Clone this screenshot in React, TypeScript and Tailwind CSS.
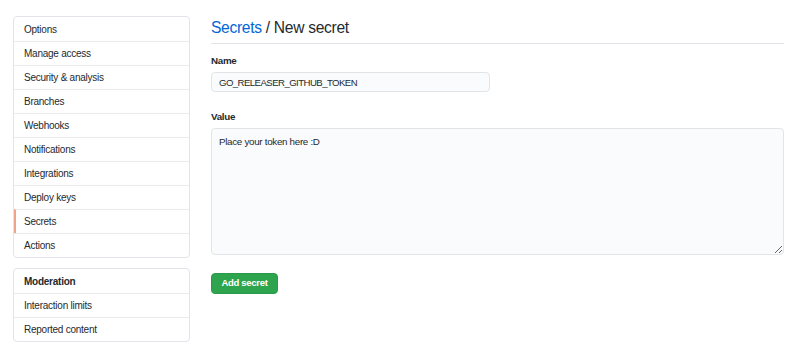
import React from "react";

const items = [
  "Options",
  "Manage access",
  "Security & analysis",
  "Branches",
  "Webhooks",
  "Notifications",
  "Integrations",
  "Deploy keys",
  "Secrets",
  "Actions",
];

export default function App() {
  return (
    <div
      className="w-[800px] h-[361px] bg-white text-[#24292e] flex pl-[13px] pt-[16px] gap-[21px]"
      style={{ fontFamily: '"Liberation Sans", Arial, sans-serif' }}
    >
      <div className="w-[177px] flex flex-col gap-[10px] shrink-0">
        <nav className="border border-[#e1e4e8] rounded-[4px] overflow-hidden">
          {items.map((it, i) => (
            <div
              key={it}
              className={
                "h-[24px] flex items-center text-[10px] tracking-[-0.25px] " +
                (i > 0 ? "border-t border-[#eaecef] " : "") +
                (it === "Secrets"
                  ? "border-l-2 border-l-[#f0a38a] pl-[8px]"
                  : "pl-[10px]")
              }
            >
              {it}
            </div>
          ))}
        </nav>
        <nav className="border border-[#e1e4e8] rounded-[4px] overflow-hidden">
          <div className="h-[24px] flex items-center pl-[10px] text-[10px] tracking-[-0.25px] font-bold">
            Moderation
          </div>
          <div className="h-[24px] flex items-center pl-[10px] text-[10px] tracking-[-0.25px] border-t border-[#eaecef]">
            Interaction limits
          </div>
          <div className="h-[24px] flex items-center pl-[10px] text-[10px] tracking-[-0.25px] border-t border-[#eaecef]">
            Reported content
          </div>
        </nav>
      </div>
      <div className="w-[573px] flex flex-col">
        <div className="h-[28px] border-b border-[#e1e4e8] text-[15.6px] tracking-[-0.3px] leading-[24px]">
          <span className="text-[#0366d6]">Secrets</span> / New secret
        </div>
        <label className="mt-[8px] h-[18px] leading-[18px] text-[9.8px] tracking-[-0.3px] font-bold">Name</label>
        <input
          readOnly
          value="GO_RELEASER_GITHUB_TOKEN"
          className="mt-[2px] w-[279px] h-[20px] bg-[#fafbfc] border border-[#e1e4e8] rounded-[4px] px-[7px] text-[9.6px] tracking-[-0.55px] text-[#24292e] outline-none"
          style={{ fontFamily: '"Liberation Sans", Arial, sans-serif' }}
        />
        <label className="mt-[16px] h-[18px] leading-[18px] text-[9.8px] tracking-[-0.3px] font-bold">Value</label>
        <textarea
          readOnly
          value="Place your token here :D"
          className="mt-[2px] w-[573px] h-[127px] bg-[#fafbfc] border border-[#e1e4e8] rounded-[4px] px-[7px] py-[6px] text-[9.8px] tracking-[-0.3px] leading-[14px] text-[#24292e] outline-none"
          style={{ fontFamily: '"Liberation Sans", Arial, sans-serif', resize: "both" }}
        />
        <div className="mt-[18px]">
          <button className="w-[67px] h-[21px] rounded-[4px] bg-[#2ea44f] border border-[#2a9a4a] text-white text-[9.5px] tracking-[-0.3px] font-bold flex items-center justify-center">
            Add secret
          </button>
        </div>
      </div>
    </div>
  );
}
